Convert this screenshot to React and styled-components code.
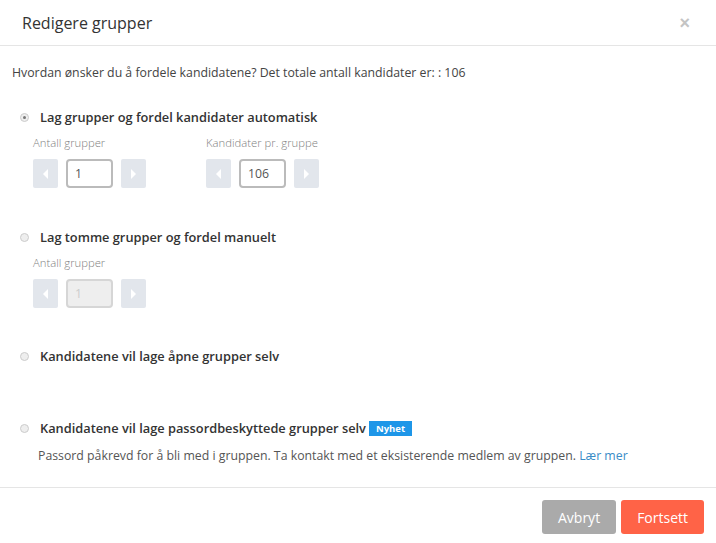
import React from 'react';
import styled, { createGlobalStyle } from 'styled-components';

const GlobalStyle = createGlobalStyle`
  html, body {
    margin: 0;
    padding: 0;
    background: #fff;
    font-family: "Open Sans", "Liberation Sans", sans-serif;
  }
`;

const Modal = styled.div`
  width: 716px;
  height: 543px;
  background: #fff;
  display: flex;
  flex-direction: column;
  color: #333;
`;

const Header = styled.div`
  height: 46px;
  border-bottom: 1px solid #e5e5e5;
  display: flex;
  align-items: center;
  justify-content: space-between;
  padding: 0 26px 0 22px;
  box-sizing: border-box;
`;

const Title = styled.h4`
  margin: 0;
  font-size: 16px;
  font-weight: 400;
  color: #333;
`;

const Close = styled.button`
  border: 0;
  background: none;
  padding: 0;
  font-size: 18px;
  line-height: 1;
  color: #c4c4c4;
  font-family: "Liberation Sans", sans-serif;
  font-weight: 700;
  cursor: pointer;
`;

const Body = styled.div`
  flex: 1;
  padding: 18px 12px 0 12px;
`;

const Intro = styled.p`
  margin: 0 0 27px 0;
  font-size: 12.3px;
  color: #444;
`;

const Option = styled.div`
  padding-left: 8px;
  margin-bottom: ${p => p.$gap}px;
`;

const RadioRow = styled.label`
  display: flex;
  align-items: center;
  gap: 11px;
  font-size: 12.8px;
  font-weight: 600;
  color: #333;
`;

const Radio = styled.span`
  width: 7px;
  height: 7px;
  border-radius: 50%;
  border: 1px solid #ccc;
  background: #eee;
  display: inline-flex;
  align-items: center;
  justify-content: center;
  &::after {
    content: '';
    width: 3px;
    height: 3px;
    border-radius: 50%;
    background: ${p => (p.$checked ? '#777' : 'transparent')};
  }
`;

const Fields = styled.div`
  display: flex;
  gap: 60px;
  padding-left: 13px;
  margin-top: 9px;
`;

const Field = styled.div`
  display: flex;
  flex-direction: column;
`;

const FieldLabel = styled.span`
  font-size: 11.3px;
  color: #808080;
  font-weight: 300;
  margin-bottom: 9px;
`;

const Stepper = styled.div`
  display: flex;
  align-items: center;
  gap: 8px;
`;

const StepButton = styled.button`
  width: 25px;
  height: 29px;
  border: 0;
  border-radius: 2px;
  background: #e2e6ec;
  padding: 0;
  display: flex;
  align-items: center;
  justify-content: center;
`;

const Arrow = styled.span`
  width: 0;
  height: 0;
  border-top: 5px solid transparent;
  border-bottom: 5px solid transparent;
  ${p => (p.$dir === 'left' ? 'border-right: 5px solid #fff;' : 'border-left: 5px solid #fff;')}
`;

const NumberInput = styled.input`
  width: 47px;
  height: 29px;
  box-sizing: border-box;
  border: 2px solid ${p => (p.disabled ? '#d6d6d6' : '#bbb')};
  border-radius: 4px;
  background: ${p => (p.disabled ? '#eeeeee' : '#fff')};
  padding: 0 7px;
  font-family: inherit;
  font-size: 12.3px;
  color: ${p => (p.disabled ? '#ccc' : '#555')};
  outline: none;
`;

const Badge = styled.span`
  display: inline-block;
  background: #1e96e8;
  color: #fff;
  font-size: 9.5px;
  font-weight: 700;
  padding: 1px 7px;
  margin-left: -8px;
  line-height: 13px;
`;

const Description = styled.p`
  margin: 10px 0 0 18px;
  font-size: 12.3px;
  color: #555;
`;

const Link = styled.a`
  color: #3a8cc7;
  text-decoration: none;
`;

const Footer = styled.div`
  border-top: 1px solid #e5e5e5;
  height: 56px;
  display: flex;
  justify-content: flex-end;
  align-items: flex-start;
  gap: 5px;
  padding: 12px 12px 0 0;
  box-sizing: border-box;
`;

const Button = styled.button`
  height: 34px;
  padding: 0 ${p => p.$pad}px;
  border: 0;
  border-radius: 3px;
  background: ${p => p.$bg};
  color: #fff;
  font-family: inherit;
  font-size: 14px;
  cursor: pointer;
`;

function NumberStepper({ value, disabled }) {
  return (
    <Stepper>
      <StepButton><Arrow $dir="left" /></StepButton>
      <NumberInput value={value} disabled={disabled} readOnly />
      <StepButton><Arrow $dir="right" /></StepButton>
    </Stepper>
  );
}

export default function App() {
  return (
    <>
      <GlobalStyle />
      <Modal>
        <Header>
          <Title>Redigere grupper</Title>
          <Close>×</Close>
        </Header>
        <Body>
          <Intro>Hvordan ønsker du å fordele kandidatene? Det totale antall kandidater er: : 106</Intro>

          <Option $gap={40}>
            <RadioRow><Radio $checked />Lag grupper og fordel kandidater automatisk</RadioRow>
            <Fields>
              <Field>
                <FieldLabel>Antall grupper</FieldLabel>
                <NumberStepper value="1" />
              </Field>
              <Field>
                <FieldLabel>Kandidater pr. gruppe</FieldLabel>
                <NumberStepper value="106" />
              </Field>
            </Fields>
          </Option>

          <Option $gap={39}>
            <RadioRow><Radio />Lag tomme grupper og fordel manuelt</RadioRow>
            <Fields>
              <Field>
                <FieldLabel>Antall grupper</FieldLabel>
                <NumberStepper value="1" disabled />
              </Field>
            </Fields>
          </Option>

          <Option $gap={54}>
            <RadioRow><Radio />Kandidatene vil lage åpne grupper selv</RadioRow>
          </Option>

          <Option $gap={0}>
            <RadioRow><Radio />Kandidatene vil lage passordbeskyttede grupper selv <Badge>Nyhet</Badge></RadioRow>
            <Description>
              Passord påkrevd for å bli med i gruppen. Ta kontakt med et eksisterende medlem av gruppen. <Link href="#">Lær mer</Link>
            </Description>
          </Option>
        </Body>
        <Footer>
          <Button $bg="#aaaaaa" $pad={16}>Avbryt</Button>
          <Button $bg="#ff6347" $pad={16}>Fortsett</Button>
        </Footer>
      </Modal>
    </>
  );
}
